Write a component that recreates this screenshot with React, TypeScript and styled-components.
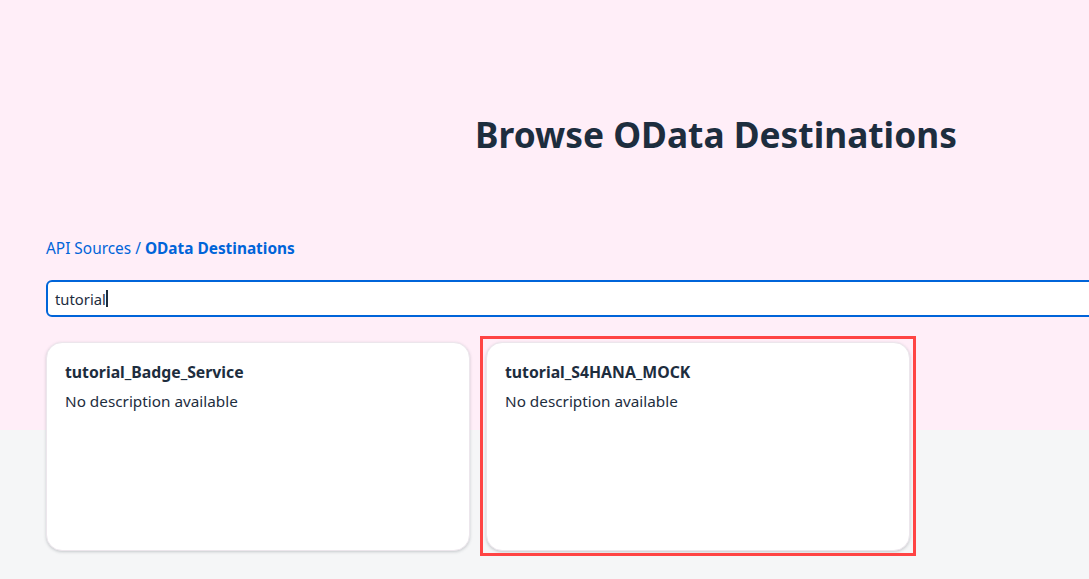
import React from "react";
import styled, { createGlobalStyle } from "styled-components";

const GlobalStyle = createGlobalStyle`
  html, body {
    margin: 0;
    padding: 0;
  }
  body {
    font-family: "Noto Sans", "Liberation Sans", sans-serif;
    color: #1d2d3e;
    background: linear-gradient(to bottom, #ffeef8 0, #ffeef8 430px, #f5f6f7 430px, #f5f6f7 100%);
    min-height: 100vh;
    overflow: hidden;
  }
`;

const Page = styled.main`
  width: 1340px;
  padding: 113px 46px 40px;
  display: flex;
  flex-direction: column;
`;

const Title = styled.h1`
  margin: 0;
  text-align: center;
  font-size: 35.3px;
  line-height: 43px;
  font-weight: 700;
  color: #1d2d3e;
`;

const Breadcrumb = styled.nav`
  margin-top: 83px;
  font-size: 15.4px;
  line-height: 20px;
  color: #0064d9;
`;

const Crumb = styled.span<{ $current?: boolean }>`
  font-weight: ${(p) => (p.$current ? 700 : 400)};
`;

const SearchBox = styled.div`
  margin-top: 21px;
  height: 37px;
  box-sizing: border-box;
  border: 2px solid #0064d9;
  border-radius: 6px;
  background: #ffffff;
  display: flex;
  align-items: center;
  padding: 0 7px;
  font-size: 14.8px;
  color: #1d2d3e;
`;

const Caret = styled.span`
  display: inline-block;
  width: 2px;
  height: 17px;
  background: #1d2d3e;
  margin-left: 0;
`;

const CardGrid = styled.div`
  margin-top: 25px;
  display: grid;
  grid-template-columns: repeat(2, 424px);
  gap: 16px;
`;

const Card = styled.article`
  position: relative;
  height: 209px;
  box-sizing: border-box;
  background: #ffffff;
  border: 1px solid #ece6ec;
  border-radius: 16px;
  box-shadow: 0 1px 3px rgba(60, 70, 80, 0.25);
  padding: 19px 18px;
`;

const Highlight = styled.div`
  position: absolute;
  top: -7px;
  left: -7px;
  right: -7px;
  bottom: -6px;
  border: 3px solid #ff4444;
  pointer-events: none;
`;

const CardTitle = styled.h2`
  margin: 0;
  font-size: 15.8px;
  line-height: 20px;
  font-weight: 700;
  color: #1d2d3e;
`;

const CardText = styled.p`
  margin: 9px 0 0;
  font-size: 15.3px;
  line-height: 20px;
  color: #1d2d3e;
`;

const destinations = [
  { name: "tutorial_Badge_Service", highlight: false },
  { name: "tutorial_S4HANA_MOCK", highlight: true },
];

export default function App() {
  return (
    <>
      <GlobalStyle />
      <Page>
        <Title>Browse OData Destinations</Title>
        <Breadcrumb>
          <Crumb>API Sources</Crumb> / <Crumb $current>OData Destinations</Crumb>
        </Breadcrumb>
        <SearchBox>
          tutorial
          <Caret />
        </SearchBox>
        <CardGrid>
          {destinations.map((d) => (
            <Card key={d.name}>
              {d.highlight && <Highlight />}
              <CardTitle>{d.name}</CardTitle>
              <CardText>No description available</CardText>
            </Card>
          ))}
        </CardGrid>
      </Page>
    </>
  );
}
